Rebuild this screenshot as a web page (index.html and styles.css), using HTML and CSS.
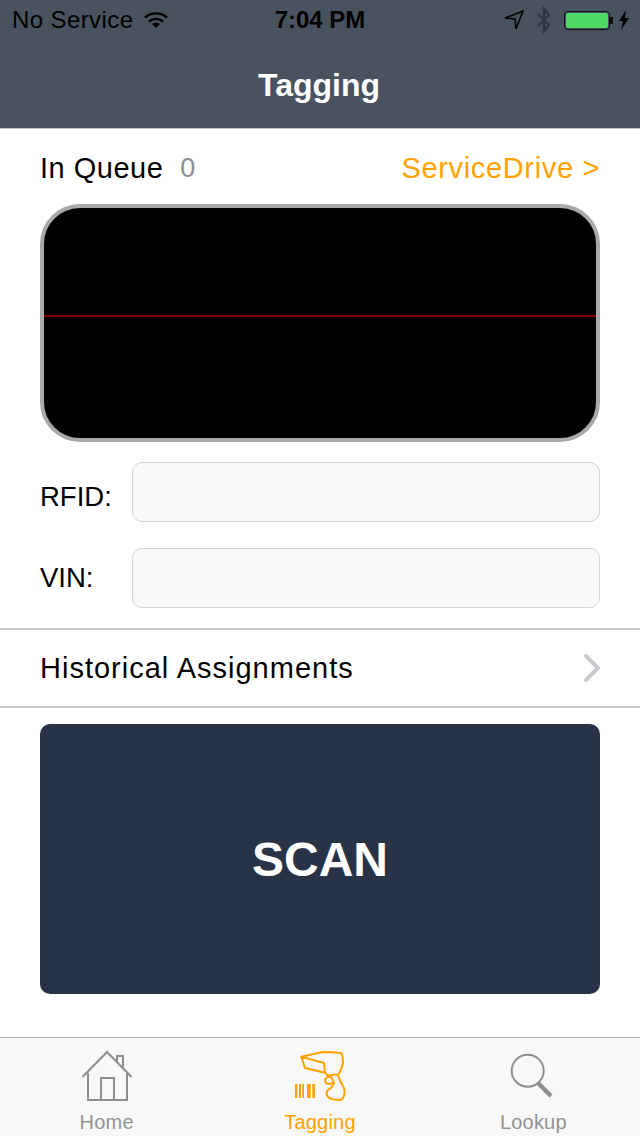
FILE: index.html
```html
<!DOCTYPE html>
<html lang="en">
<head>
    <meta charset="UTF-8">
    <meta name="viewport" content="width=device-width, initial-scale=1.0">
    <title>Tagging</title>
    <link rel="stylesheet" href="styles.css">
</head>
<body>

<div id="app">
    <header class="topbar">
        <div class="status">
            <div class="status-left">
                <span>No Service</span>
                <svg class="wifi" width="26" height="18" viewBox="0 0 26 18">
                    <path d="M2 6.5 C8 1 18 1 24 6.5" fill="none" stroke="#000" stroke-width="2.4"/>
                    <path d="M6 10.5 C10 7 16 7 20 10.5" fill="none" stroke="#000" stroke-width="2.4"/>
                    <path d="M9 13 C11.5 11 14.5 11 17 13 L13 17 Z" fill="#000"/>
                </svg>
            </div>
            <span class="status-time">7:04 PM</span>
            <div class="status-right">
                <svg width="22" height="22" viewBox="0 0 22 22">
                    <path d="M2 9 L20 2 L13 20 L12 10 Z" fill="none" stroke="#000" stroke-width="1.5"/>
                </svg>
                <svg class="bt" width="18" height="28" viewBox="0 0 18 28">
                    <path d="M3 8 L14 19 L9 25 L9 3 L14 9 L3 20" fill="none" stroke="#30363f" stroke-width="2.4"/>
                </svg>
                <div class="battery"><div class="battery-fill"></div></div>
                <div class="battery-tip"></div>
                <svg width="12" height="20" viewBox="0 0 12 20">
                    <path d="M8 0 L1 11 L5 11 L3 20 L11 8 L7 8 Z" fill="#000"/>
                </svg>
            </div>
        </div>
        <h1 class="title">Tagging</h1>
    </header>

    <main class="content">
        <div class="queue">
            <div class="queue-left">
                <span class="queue-label">In Queue</span>
                <span class="queue-count">0</span>
            </div>
            <span class="service-link">ServiceDrive &gt;</span>
        </div>

        <div class="scanner"><div class="scan-line"></div></div>

        <div class="form">
            <div class="field field-rfid">
                <label for="rfid">RFID:</label>
                <input type="text" id="rfid">
            </div>
            <div class="field field-vin">
                <label for="vin">VIN:</label>
                <input type="text" id="vin">
            </div>
        </div>

        <div class="history">
            <span>Historical Assignments</span>
            <svg width="16" height="28" viewBox="0 0 16 28">
                <path d="M2 2 L14 14 L2 26" fill="none" stroke="#c8c8cd" stroke-width="4" stroke-linecap="round"/>
            </svg>
        </div>

        <div class="scan-wrap">
            <button class="scan-btn">SCAN</button>
        </div>
    </main>

    <nav class="tabbar">
        <div class="tab">
            <svg width="52" height="52" viewBox="0 0 52 52">
                <path d="M1.5 27 L26 2 L50.5 27" fill="none" stroke="#8e8e8e" stroke-width="2"/>
                <path d="M36 11 V6 H42 V17" fill="none" stroke="#8e8e8e" stroke-width="2"/>
                <path d="M7 23 V50 H46 V23" fill="none" stroke="#8e8e8e" stroke-width="2"/>
                <path d="M20 50 V28 H33 V50" fill="none" stroke="#8e8e8e" stroke-width="2"/>
            </svg>
            <span>Home</span>
        </div>
        <div class="tab tab-active">
            <svg width="52" height="52" viewBox="0 0 52 52">
                <path d="M1 34 H3.3 V48 H1 Z M5 34 H7 V48 H5 Z M8.3 34 H10 V48 H8.3 Z M13 34 H16.7 V48 H13 Z M18.3 34 H21 V48 H18.3 Z" fill="#ffa200"/>
                <path d="M7.3 6.7 L29 2 Q38 2 47.7 3.3 Q49 8 49 13 Q47 21 44 25 Q46 32 50 38 Q52 46 47 50 Q38 50 34.3 47.3 Q31 43 34 40 Q39 37 40 33" fill="none" stroke="#ffa200" stroke-width="2" stroke-linejoin="round" stroke-linecap="round"/>
                <path d="M7.3 6.7 L11 18 L31 22.7 L30 13 Z M31 22.7 Q34 27 38 25 Q41 24 44 25" fill="none" stroke="#ffa200" stroke-width="2" stroke-linejoin="round" stroke-linecap="round"/>
                <ellipse cx="35" cy="30.5" rx="4" ry="3.5" fill="none" stroke="#ffa200" stroke-width="2"/>
            </svg>
            <span>Tagging</span>
        </div>
        <div class="tab">
            <svg width="52" height="52" viewBox="0 0 52 52">
                <circle cx="20.7" cy="20.7" r="16" fill="none" stroke="#8e8e8e" stroke-width="2"/>
                <path d="M31 33 L44 46" fill="none" stroke="#8e8e8e" stroke-width="4.5"/>
            </svg>
            <span>Lookup</span>
        </div>
    </nav>
</div>

</body>
</html>
```

FILE: styles.css
```css
* {
    box-sizing: border-box;
}

body {
    margin: 0;
    font-family: "Liberation Sans", Arial, sans-serif;
    background-color: #fff;
}

#app {
    width: 640px;
    height: 1136px;
    display: flex;
    flex-direction: column;
    overflow: hidden;
}

.topbar {
    height: 129px;
    background-color: #49525f;
    border-bottom: 1px solid #c4c6c9;
}

.status {
    height: 40px;
    padding: 0 10px 0 12px;
    display: grid;
    grid-template-columns: 1fr auto 1fr;
    align-items: center;
    font-size: 24px;
    letter-spacing: 0.4px;
    color: #000;
}

.status-left {
    display: flex;
    align-items: center;
    gap: 10px;
}

.status-time {
    padding-right: 2px;
    font-weight: bold;
    letter-spacing: 0;
}

.status-right {
    display: flex;
    align-items: center;
    justify-content: flex-end;
}

.bt {
    margin: 0 11px 0 10px;
}

.battery {
    width: 46px;
    height: 19px;
    padding: 1px;
    border: 1.5px solid #111;
    border-radius: 4px;
}

.battery-fill {
    height: 100%;
    background-color: #4cd964;
    border-radius: 2px;
}

.battery-tip {
    width: 3px;
    height: 7px;
    margin-right: 5px;
    background-color: #111;
}

.title {
    margin: 0;
    padding: 29px 2px 0 0;
    text-align: center;
    color: #fff;
    font-size: 32px;
    font-weight: bold;
    line-height: 32px;
}

.content {
    flex: 1;
}

.queue {
    height: 75px;
    padding: 4px 40px 0;
    display: flex;
    justify-content: space-between;
    align-items: center;
    font-size: 29px;
}

.queue-left {
    display: flex;
    align-items: center;
    gap: 17px;
}

.queue-label {
    letter-spacing: 0.5px;
}

.queue-count {
    color: #8e8e93;
    font-size: 27px;
}

.service-link {
    color: #ffa200;
    letter-spacing: 0.65px;
}

.scanner {
    height: 238px;
    margin: 0 40px;
    background-color: #010104;
    border: 4px solid #a9a9a9;
    border-radius: 40px;
    padding-top: 107px;
}

.scan-line {
    height: 2px;
    background-color: #800000;
}

.form {
    padding: 20px 40px 0;
}

.field {
    display: flex;
    align-items: center;
    font-size: 27.5px;
}

.field-rfid {
    margin-bottom: 26px;
}

.field-rfid label {
    padding-top: 10px;
}

.field label {
    width: 92px;
}

.field input {
    flex: 1;
    height: 60px;
    background-color: #f9f9f9;
    border: 1px solid #d4d4d4;
    border-radius: 10px;
}

.history {
    height: 80px;
    margin-top: 20px;
    padding: 0 40px;
    display: flex;
    justify-content: space-between;
    align-items: center;
    border-top: 2px solid #c8c8c8;
    border-bottom: 2px solid #c8c8c8;
    font-size: 29px;
    letter-spacing: 1px;
}

.scan-wrap {
    padding: 16px 40px 0;
}

.scan-btn {
    display: block;
    width: 100%;
    height: 270px;
    padding-top: 2px;
    background-color: #283347;
    color: #fff;
    border: none;
    border-radius: 10px;
    font-family: inherit;
    font-size: 48px;
    font-weight: bold;
}

.tabbar {
    height: 99px;
    display: grid;
    grid-template-columns: repeat(3, 1fr);
    background-color: #f8f8f8;
    border-top: 1px solid #b5b5b5;
}

.tab {
    display: flex;
    flex-direction: column;
    align-items: center;
    padding-top: 12px;
    color: #929292;
    font-size: 20px;
    letter-spacing: 0.2px;
}

.tab svg {
    display: block;
    margin-bottom: 9px;
}

.tab-active {
    color: #ffa200;
}
```
